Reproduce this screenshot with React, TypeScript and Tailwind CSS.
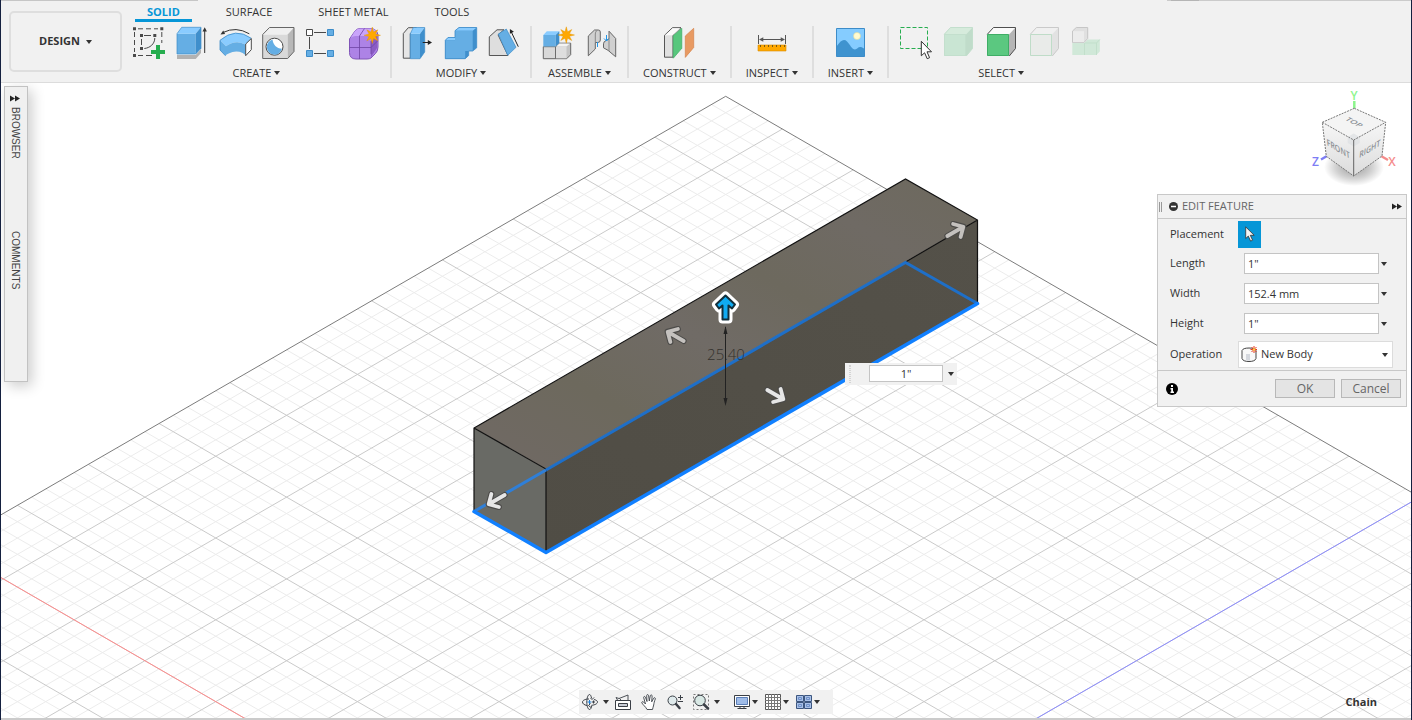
import { useState, type ReactNode } from 'react'

const INK = '#4a4a4a'

function Caret({ className = '' }: { className?: string }) {
  return (
    <svg className={`w-[6px] h-[4px] shrink-0 ${className}`} viewBox="0 0 6 4" aria-hidden="true">
      <path d="M0 0h6L3 4z" fill="#333" />
    </svg>
  )
}

function Glyph({ children }: { children: ReactNode }) {
  return (
    <svg className="block w-8 h-[34px] overflow-visible" viewBox="0 0 32 34" fill="none" aria-hidden="true">
      {children}
    </svg>
  )
}

function Star({ x, y }: { x: number; y: number }) {
  return (
    <path
      transform={`translate(${x} ${y})`}
      d="M0-8.200 1.300-3.200 5.500-5.500 3.200-1.300 8.200 0 3.200 1.300 5.500 5.500 1.300 3.200 0 8.200-1.300 3.200-5.500 5.500-3.200 1.300-8.200 0-3.200-1.300-5.500-5.500-1.300-3.200z"
      fill="#ffa800"
      stroke="#e09300"
      strokeWidth="0.4"
    />
  )
}

function SketchIcon() {
  return (
    <Glyph>
      <path d="M5 2.800h5m3 0h5m3 0h4M1.500 6v5m0 3v5m0 3v4M28.800 6v5m0 3v3M5 29.500h5m3 0h6" stroke={INK} />
      <path d="M11 9.500h7M8.500 13v6M21.800 12c0 6-5 10-10.500 10.500" stroke={INK} />
      <path d="M0 1.300h3v3H0zM27.300 1.300h3v3h-3zM0 28h3v3H0zM7 8h3v3H7zM20.300 8h3v3h-3zM7 21h3v3H7z" fill={INK} />
      <path d="M23 19h4v5h5v4h-5v5h-4v-5h-5v-4h5z" fill="#26ad4f" />
    </Glyph>
  )
}

function ExtrudeIcon() {
  return (
    <Glyph>
      <path d="M1 29h18.700l5.300-6v4l-5.300 6H1z" fill="#b2b2b2" />
      <path d="M1 7.700h18.700V28H1z" fill="#65aee4" />
      <path d="M1 7.700 5.700 1.300H25l-5.300 6.400z" fill="#8accff" />
      <path d="M19.700 7.700 25 1.300v21L19.700 28z" fill="#3f8fcc" />
      <path d="M1 7.700 5.700 1.300H25v21L19.700 28H1z" stroke="#3d8cc8" strokeWidth="0.7" />
      <path d="M28.700 27V4" stroke="#333" />
      <path d="m28.700 1.300 2.200 4.200h-4.400z" fill="#333" />
    </Glyph>
  )
}

function RevolveIcon() {
  return (
    <Glyph>
      <path d="M1 14.300Q16.500 1 32.300 12.300l-5.600 6.400Q17 13 7 20.300z" fill="#8accff" />
      <path d="M1 14.300l6 6Q17 13 26.700 18.700v11q-1-1.400-3-2.700-7-3-14 .5-2.500 1-3.200 2.300L1 24z" fill="#65aee4" />
      <path d="M1 14.300Q16.500 1 32.300 12.300M1 14.300V24l5.500 5.800" stroke="#3d8cc8" strokeWidth="0.8" />
      <path d="m26.700 18 5.600-5.500v11.200l-5.600 6z" fill="#fff" stroke={INK} />
      <path d="M30.300 7.800Q17 0 4 6.500" stroke="#333" />
      <path d="m1.500 8.500 2.700-4 1.900 3.600z" fill="#333" />
    </Glyph>
  )
}

function HoleIcon() {
  return (
    <Glyph>
      <path d="M.7 8.500h25v24H.7z" fill="#d9d9d9" />
      <path d="M.7 8.500 7.500 1.500H32l-6.300 7z" fill="#efefef" />
      <path d="m25.700 8.500 6.300-7v24l-6.300 7z" fill="#b8b8b8" />
      <path d="M.7 8.500 7.500 1.500H32v24l-6.300 7H.7z" stroke="#666" />
      <circle cx="12.5" cy="20.7" r="8.500" fill="#fff" stroke={INK} />
      <path d="M10.500 13.500c.5 5 4 9 9.500 9.200a7.700 7.700 0 1 1-9.500-9.200z" fill="#65aee4" />
    </Glyph>
  )
}

function PatternIcon() {
  return (
    <Glyph>
      <path d="M9 6.500h12M4.500 11v12M9 27.500h12" stroke={INK} />
      <path d="M1.500 3.500h6v6h-6z" fill="#fff" stroke={INK} />
      <path d="M22.500 3.500h6v6h-6zM1.500 24.500h6v6h-6zM22.500 24.500h6v6h-6z" fill="#65aee4" stroke="#3d8cc8" />
    </Glyph>
  )
}

function FormIcon() {
  return (
    <Glyph>
      <path d="M1.500 13 7 5q2-2.500 5-2.500h10q7 0 8 6.500v12q0 4-2.500 6.500L23 32q-1.500 1-4 1H8q-6.500 0-6.500-6.500z" fill="#ad83e6" stroke="#8055b8" />
      <path d="M2 13q2-3 6-3h10q5 0 5 5l6-8q-1-4.500-7-4.500H12q-3 0-5 2.500z" fill="#c9a4fa" />
      <path d="M23 15l6-7v14l-6 9z" fill="#8a5cc4" />
      <path d="M1.500 21.500H23l6.500-6.500M11.500 10v23M11.500 10l5-7.500M23 15v13" stroke="#6e44a3" strokeWidth="0.8" />
      <Star x={24.3} y={9.3} />
    </Glyph>
  )
}

function PressPullIcon() {
  return (
    <Glyph>
      <path d="M1.300 7.500 6.300 1.700h8l-6 6v24.500h-7z" fill="#e6e6e6" stroke="#555" />
      <path d="M8.300 7.700H18v25H8.300z" fill="#65aee4" />
      <path d="m8.300 7.700 3-6.200h11.400L18 7.700z" fill="#8accff" />
      <path d="m18 7.700 4.700-6.200V26L18 32.700z" fill="#3f8fcc" />
      <path d="m8.300 7.700 3-6.200h11.400V26L18 32.700H8.300z" stroke="#3d8cc8" strokeWidth="0.7" />
      <path d="M20.700 16.500H27" stroke="#222" />
      <path d="m30 16.500-4.200 2.400v-4.800z" fill="#222" />
    </Glyph>
  )
}

function CombineIcon() {
  return (
    <Glyph>
      <path d="M.3 14.300 3 11.500h7V4.700l4-3.200h17.700v20.300l-4 3.200h-4v4.500l-3.500 3.200H.3z" fill="#3f8fcc" />
      <path d="M.3 14.300 3 11.500h7v2.800zM10 4.700l4-3.200h17.700l-4 3.200z" fill="#8accff" />
      <path d="M.3 14.300H10V4.700h17.700V25h-7.500v7.700H.3z" fill="#65aee4" />
      <path d="M.3 14.300 3 11.500h7V4.700l4-3.200h17.700v20.300l-4 3.200h-4v4.500l-3.500 3.200H.3z" stroke="#3d8cc8" strokeWidth="0.8" />
    </Glyph>
  )
}

function ChamferIcon() {
  return (
    <Glyph>
      <path d="M1.300 29.500V10.800L9 3.800h7l-6 5 10 20.700z" fill="#dedede" stroke="#555" />
      <path d="m10.300 8 8-5L28 21.300l-8.300 8z" fill="#65aee4" stroke="#3d8cc8" strokeWidth="0.7" />
      <path d="M30.300 20.700 23.300 6" stroke="#222" />
      <path d="m21.900 3 4 2.700-4 2z" fill="#222" />
    </Glyph>
  )
}

function NewComponentIcon() {
  return (
    <Glyph>
      <path d="M1.300 20.700h12.400v12H1.300z" fill="#d9d9d9" stroke="#666" />
      <path d="m13.700 20.700 3.600-3.500h11.400v11.500l-4 4h-11z" fill="#c4c4c4" stroke="#666" />
      <path d="M14 21h10.500v11.300H14z" fill="#dedede" />
      <path d="m14.200 20.600 3.300-3H28l-3.500 3z" fill="#f3f3f3" />
      <path d="M1.300 9h12.400v11.500H1.300z" fill="#65aee4" />
      <path d="m1.300 9 3.500-3.800h12.500L13.700 9z" fill="#8accff" />
      <path d="m13.700 9 3.600-3.800V17l-3.600 3.500z" fill="#3f8fcc" />
      <Star x={24.3} y={9} />
    </Glyph>
  )
}

function JointIcon() {
  return (
    <Glyph>
      <path d="m3.300 10 6.200-6h3.800q2 0 2 2v8q0 2.500-2.500 2.500h-2.500V23l-7 6.800z" fill="#d0d0d0" stroke="#666" />
      <path d="M10.300 16V8q0-2 1.500-3.500" stroke="#888" />
      <path d="M30.700 12.500 24 5.200v7.600l-2.500 1.500q-3 1-3 3.500v4l4.500 2.500 7.700 6.500z" fill="#d0d0d0" stroke="#666" />
      <path d="M24 13v12" stroke="#888" />
      <path d="M12.500 16v5M21.500 9v6" stroke="#2196e8" />
      <path d="m19 12.500 2.500 2.500 2.500-2.500" stroke="#2196e8" />
    </Glyph>
  )
}

function PlaneIcon() {
  return (
    <Glyph>
      <path d="m1.500 9.300 8-7.600H18l-8 7.500v22H1.500z" fill="#e0e0e0" stroke="#555" />
      <path d="M2 9.200 9.700 2.200h7.500l-7.500 7z" fill="#fafafa" />
      <path d="m10.300 9.700 8.500-7.400v20l-8.500 9.900z" fill="#57c77d" stroke="#3fae66" strokeWidth="0.7" />
      <path d="m22.300 10 8.400-7.700v19.200l-8.400 9.900z" fill="#e89a62" stroke="#d5834a" strokeWidth="0.7" />
    </Glyph>
  )
}

function MeasureIcon() {
  return (
    <Glyph>
      <path d="M2.500 9v9M29.500 9v9M5 13.500h22" stroke="#555" />
      <path d="m3 13.500 4.300-2.300v4.600zM29 13.500l-4.300-2.300v4.600z" fill="#555" />
      <path d="M2 19h28v6H2z" fill="#ffa800" stroke="#d98a00" strokeWidth="0.6" />
      <path d="M4.500 19v2m4-2v2m4-2v2m4-2v2m4-2v2m4-2v2m4-2v2" stroke="#7a5a10" />
    </Glyph>
  )
}

function ImageIcon() {
  return (
    <Glyph>
      <path d="M2.500 2.500h28v28h-28z" fill="#85ccff" />
      <path d="M2.500 20.500C7 14 10 12.500 13 15.500s5 8 8 8 3.500-5 9.500-.5v7.500h-28z" fill="#3f93cf" />
      <path d="M2.500 2.500h28v28h-28z" stroke="#3d8cc8" />
      <circle cx="23" cy="10" r="3.500" fill="#fffbd0" stroke="#dcd9a0" strokeWidth="0.6" />
    </Glyph>
  )
}

function WindowSelectIcon() {
  return (
    <Glyph>
      <path d="M1.500 1.500h27v21h-27z" stroke="#26ad4f" strokeDasharray="4 2" />
      <path d="M22.300 15.300v14.500l3.300-3 2.600 5.900 2.400-1-2.600-5.900h4.500z" fill="#fff" stroke="#333" />
    </Glyph>
  )
}

function Cube({ front, top, side, line, edge }: { front: string; top: string; side: string; line: string; edge: string }) {
  return (
    <Glyph>
      <path d="M2.300 8.300 8.500 1.500h22v21L24.300 30h-22z" fill={side} />
      <path d="M2.300 8.300 8.500 1.500h22l-6.200 6.800z" fill={top} />
      <path d="M2.300 8.300 8.500 1.500h22v21L24.300 30" stroke={line} />
      <path d="M2.500 8.500h21v21h-21z" fill={front} stroke={edge} />
    </Glyph>
  )
}

function ComponentSelectIcon() {
  return (
    <Glyph>
      <path d="M1.300 17h12l3.500-3.500h12v12l-3.500 3.500h-24z" fill="#d0e8d8" />
      <path d="M13.500 17v12M13.500 17h12l3.300-3.500M25.500 17v12" stroke="#c2dfcb" />
      <path d="m1.500 5 3.800-3.500h11.400v11L13 16.500H1.500z" fill="#e0e0e0" stroke="#c6c6c6" />
      <path d="M2 5.200h11v11H2z" fill="#ececec" />
    </Glyph>
  )
}

const tabs = ['SOLID', 'SURFACE', 'SHEET METAL', 'TOOLS']

const groups: { label: string; tools: { name: string; icon: ReactNode }[] }[] = [
  {
    label: 'CREATE',
    tools: [
      { name: 'Create Sketch', icon: <SketchIcon /> },
      { name: 'Extrude', icon: <ExtrudeIcon /> },
      { name: 'Revolve', icon: <RevolveIcon /> },
      { name: 'Hole', icon: <HoleIcon /> },
      { name: 'Rectangular Pattern', icon: <PatternIcon /> },
      { name: 'Create Form', icon: <FormIcon /> },
    ],
  },
  {
    label: 'MODIFY',
    tools: [
      { name: 'Press Pull', icon: <PressPullIcon /> },
      { name: 'Combine', icon: <CombineIcon /> },
      { name: 'Chamfer', icon: <ChamferIcon /> },
    ],
  },
  {
    label: 'ASSEMBLE',
    tools: [
      { name: 'New Component', icon: <NewComponentIcon /> },
      { name: 'Joint', icon: <JointIcon /> },
    ],
  },
  { label: 'CONSTRUCT', tools: [{ name: 'Offset Plane', icon: <PlaneIcon /> }] },
  { label: 'INSPECT', tools: [{ name: 'Measure', icon: <MeasureIcon /> }] },
  { label: 'INSERT', tools: [{ name: 'Canvas', icon: <ImageIcon /> }] },
  {
    label: 'SELECT',
    tools: [
      { name: 'Window Selection', icon: <WindowSelectIcon /> },
      { name: 'Bodies', icon: <Cube front="#c9e5d3" top="#d6ebdc" side="#c0dcca" line="#c3dfcd" edge="#c3dfcd" /> },
      { name: 'Faces', icon: <Cube front="#5bc880" top="#fafafa" side="#b5b5b5" line="#4f4f4f" edge="#3fae66" /> },
      { name: 'Edges', icon: <Cube front="#e9ebe9" top="#f0f0f0" side="#e2e2e2" line="#cacaca" edge="#bfdcc8" /> },
      { name: 'Components', icon: <ComponentSelectIcon /> },
    ],
  },
]

function Toolbar() {
  const [tab, setTab] = useState('SOLID')

  return (
    <header className="flex bg-[#f1f1f1] border-b border-[#dcdcdc]">
      <button
        type="button"
        className="mt-[11px] mb-[10px] ml-2 w-[113px] h-[61px] shrink-0 flex items-center justify-center gap-[6px] rounded-[5px] border-2 border-[#dedede] font-bold"
      >
        DESIGN
        <Caret />
      </button>
      <div className="flex-1 min-w-0">
        <nav className="flex gap-[22px] ml-[13px]">
          {tabs.map((t) => (
            <button
              key={t}
              type="button"
              onClick={() => setTab(t)}
              className={
                t === tab
                  ? 'h-[22px] px-3 pt-[5px] leading-[14px] border-b-[3px] border-[#0696d7] text-[#0696d7] font-bold whitespace-nowrap'
                  : 'h-[22px] px-3 pt-[5px] leading-[14px] border-b-[3px] border-transparent whitespace-nowrap'
              }
            >
              {t}
            </button>
          ))}
        </nav>
        <div className="flex mt-1 ml-px">
          {groups.map((g, i) => (
            <section
              key={g.label}
              className={
                i < groups.length - 1
                  ? 'flex flex-col items-center h-[52px] px-[10px] border-r-2 border-[#dedede]'
                  : 'flex flex-col items-center h-[52px] px-[10px]'
              }
            >
              <div className="flex gap-[11px]">
                {g.tools.map((tool) => (
                  <button key={tool.name} type="button" aria-label={tool.name}>
                    {tool.icon}
                  </button>
                ))}
              </div>
              <button type="button" className="flex items-center gap-[3px] mt-[5px] px-1 leading-4">
                {g.label}
                <Caret />
              </button>
            </section>
          ))}
        </div>
      </div>
    </header>
  )
}

// Grid origin is the far corner; one step is one minor cell along either edge.
const OX = 725.7
const OY = 96.3
const SX = 14.165
const SY = 8.18
const SIZE = 110

function gridPath(test: (n: number) => boolean, offset: number, dir: 1 | -1) {
  let d = ''
  for (let n = 1; n < SIZE; n++) {
    if (!test(n - offset)) continue
    const x = OX + dir * n * SX
    const y = OY + n * SY
    d += `M${x.toFixed(1)} ${y.toFixed(1)}l${(-dir * SIZE * SX).toFixed(1)} ${(SIZE * SY).toFixed(1)}`
  }
  return d
}

const isMajor = (n: number) => n % 5 === 0
const isMinor = (n: number) => n % 5 !== 0

function Manipulator({ x, y, angle, fill = '#e6e6e6' }: { x: number; y: number; angle: number; fill?: string }) {
  const d = 'M-10 0H8M1-7.500 8.500 0 1 7.500'
  return (
    <g transform={`translate(${x} ${y}) rotate(${angle})`} fill="none" strokeLinecap="round" strokeLinejoin="round">
      <path d={d} stroke="#4c4b49" strokeWidth="6" />
      <path d={d} stroke={fill} strokeWidth="3.8" />
    </g>
  )
}

function Scene() {
  return (
    <svg
      className="absolute inset-0 w-full h-full"
      viewBox="1 83 1410 635"
      preserveAspectRatio="xMidYMid slice"
      role="img"
      aria-label="Box preview"
    >
      <defs>
        <linearGradient id="top" x1="0" y1="1" x2="1" y2="0">
          <stop offset="0" stopColor="#706965" />
          <stop offset="0.25" stopColor="#6d695d" />
          <stop offset="0.45" stopColor="#706b66" />
          <stop offset="0.62" stopColor="#6d695e" />
          <stop offset="0.8" stopColor="#6f6a64" />
          <stop offset="1" stopColor="#6d695d" />
        </linearGradient>
        <linearGradient id="side" x1="0" y1="1" x2="1" y2="0">
          <stop offset="0" stopColor="#504d45" />
          <stop offset="1" stopColor="#545149" />
        </linearGradient>
      </defs>
      <g fill="none">
        <path d={gridPath(isMinor, 4, 1) + gridPath(isMinor, 0, -1)} stroke="#ececec" />
        <path d={gridPath(isMajor, 4, 1) + gridPath(isMajor, 0, -1)} stroke="#cacaca" />
        <path d={`M${OX - SIZE * SX} ${OY + SIZE * SY}L${OX} ${OY}l${SIZE * SX} ${SIZE * SY}`} stroke="#7c7c7c" />
        <path d={`M${OX - 55 * SX} ${OY + 55 * SY}l${50 * SX} ${50 * SY}`} stroke="#ff8c8c" />
        <path d={`M${OX + 49 * SX} ${OY + 49 * SY}l${-50 * SX} ${50 * SY}`} stroke="#8c8cff" />
      </g>

      <path d="M474 428 905.500 179 977.500 220 546 469z" fill="url(#top)" />
      <path d="M546 469 977.500 220V303.500L546 552.500z" fill="url(#side)" />
      <path d="M474 428 546 469V552.500L474 511.500z" fill="#696a65" />
      <path d="M474 511.500V428L905.500 179 977.500 220V303.500M474 428 546 469V552.500M905.500 262 977.500 220" fill="none" stroke="#111" strokeWidth="1.2" />
      <path d="M474 511.500 546 470" stroke="#2f7fd8" strokeWidth="3" />
      <path d="M546 470 905.500 262.500 977.500 303.500" fill="none" stroke="#1e6fc8" strokeWidth="3" />
      <path d="M474 511.500 546 552.500 977.500 303.500" fill="none" stroke="#1180ff" strokeWidth="3.5" strokeLinejoin="round" strokeLinecap="round" />

      <text x="726" y="360" textAnchor="middle" fill="#34322e" fontSize="15" fontWeight="300">
        25.40
      </text>
      <path d="M725.500 327V404" stroke="#222" />
      <path d="m725.500 326 2 8h-4zM725.500 406l2-8h-4z" fill="#222" />

      <Manipulator x={675} y={336} angle={-150} fill="#c4c1be" />
      <Manipulator x={776} y={395} angle={30} />
      <Manipulator x={956} y={231} angle={-30} fill="#c4c1be" />
      <Manipulator x={496} y={500} angle={150} />

      <g strokeLinejoin="round">
        <path d="M725.500 295.500 735 304.500 732 308.500 728.500 305.500V319.500H722.500V305.500L719 308.500 716 304.500z" fill="#fff" stroke="#fff" strokeWidth="8" />
        <path d="M725.500 295.500 735 304.500 732 308.500 728.500 305.500V319.500H722.500V305.500L719 308.500 716 304.500z" fill="#0fabf2" stroke="#12303c" strokeWidth="2" />
      </g>
    </svg>
  )
}

function ViewCube() {
  return (
    <svg className="absolute top-[5px] right-[11px] w-[92px] h-[104px]" viewBox="1308 88 92 104" role="img" aria-label="View cube">
      <defs>
        <radialGradient id="shadow">
          <stop offset="0" stopColor="#000" stopOpacity="0.4" />
          <stop offset="0.6" stopColor="#000" stopOpacity="0.18" />
          <stop offset="1" stopColor="#000" stopOpacity="0" />
        </radialGradient>
        <linearGradient id="face" x1="0" y1="0" x2="0" y2="1">
          <stop offset="0" stopColor="#f6f6f6" />
          <stop offset="1" stopColor="#dcdcdc" />
        </linearGradient>
      </defs>
      <ellipse cx="1354" cy="167" rx="30" ry="19" fill="url(#shadow)" />
      <path d="M1354.300 101v7" stroke="#8cf58c" strokeWidth="2.5" />
      <path d="m1327 156-6 3.500" stroke="#7d7df5" strokeWidth="2.5" />
      <path d="m1381 156 7 4" stroke="#f58c8c" strokeWidth="2.5" />
      <path d="m1354.300 108.300 31.400 14-32 17.700-31.400-17.700z" fill="#f4f4f4" />
      <path d="m1322.300 122.300 31.400 17.700v36l-27.400-19.700z" fill="url(#face)" />
      <path d="m1385.700 122.300-32 17.700v36l28.300-20z" fill="url(#face)" />
      <path d="m1353.700 133.500 6 3.500v6l-6 3.500-6-3.500v-6z" fill="#dde0e3" opacity="0.7" />
      <path
        d="m1354.300 108.300 31.400 14-3.700 33.700-28.300 20-27.400-19.700-4-34zM1322.300 122.300l31.400 17.700 32-17.700"
        fill="none"
        stroke="#777"
        strokeDasharray="2 1"
      />
      <path d="M1353.700 140v36" stroke="#666" />
      <g fontSize="9" fill="#8a8f94" textAnchor="middle" fontWeight="600">
        <text transform="matrix(.84 .46 -.7 .4 1352 123.500)">TOP</text>
        <text transform="matrix(.78 .47 .1 1 1338.500 152)">FRONT</text>
        <text transform="matrix(.78 -.47 -.1 1 1369.500 152)">RIGHT</text>
      </g>
      <g fontSize="12" fontWeight="600" textAnchor="middle">
        <text x="1354" y="100" fill="#8cf58c">Y</text>
        <text x="1315.5" y="166" fill="#7d7df5">Z</text>
        <text x="1392" y="166" fill="#f58c8c">X</text>
      </g>
    </svg>
  )
}

function FastForward({ className = '' }: { className?: string }) {
  return (
    <svg className={`w-[10px] h-[7px] ${className}`} viewBox="0 0 10 7" aria-hidden="true">
      <path d="m0 .5 5 3-5 3zM5 .5l5 3-5 3z" fill="#222" />
    </svg>
  )
}

function SidePanels() {
  return (
    <aside className="absolute left-[3px] top-[3px] w-6 h-[296px] flex flex-col items-center pr-[2px] bg-[#f0f0f0] border border-[#c2c2c2] shadow-[4px_4px_14px_rgba(0,0,0,0.2)] font-['Liberation_Sans',sans-serif] text-[10px] leading-3 text-[#444]">
      <button type="button" aria-label="Expand" className="mt-2">
        <FastForward />
      </button>
      <button type="button" className="h-[124px] mt-[5px] text-start [writing-mode:vertical-rl]">
        BROWSER
      </button>
      <button type="button" className="text-start [writing-mode:vertical-rl]">
        COMMENTS
      </button>
    </aside>
  )
}

function ValueField({ id, label, value }: { id: string; label: string; value: string }) {
  const [text, setText] = useState(value)
  return (
    <div className="flex items-center h-[30px] pl-3 pb-px">
      <label htmlFor={id} className="w-[74px]">
        {label}
      </label>
      <input
        id={id}
        value={text}
        onChange={(e) => setText(e.target.value)}
        className="w-[135px] h-[21px] px-[3px] bg-white border border-[#c4c4c4] outline-none"
      />
      <button type="button" aria-label={`${label} options`} className="p-[2px] py-2">
        <Caret />
      </button>
    </div>
  )
}

function EditFeature() {
  return (
    <form
      onSubmit={(e) => e.preventDefault()}
      className="absolute top-[111px] right-1 w-[250px] bg-[#f1f1f1] border border-[#c8c8c8]"
    >
      <div className="flex items-center h-6 pl-px pr-1 border-b border-[#c8c8c8] text-[#666]">
        <span className="w-[3px] h-[10px] border-x border-[#999]" />
        <svg className="w-[9px] h-[9px] ml-[7px] mr-1" viewBox="0 0 9 9" aria-hidden="true">
          <circle cx="4.5" cy="4.5" r="4.5" fill="#333" />
          <path d="M2 4.500h5" stroke="#fff" strokeWidth="1.5" />
        </svg>
        <h2>EDIT FEATURE</h2>
        <button type="button" aria-label="Collapse panel" className="ml-auto">
          <FastForward />
        </button>
      </div>

      <div className="flex items-center h-[30px] pl-3">
        <span className="w-[68px]">Placement</span>
        <button type="button" aria-label="Select placement" className="w-[23px] h-[27px] flex items-center justify-center bg-[#0696d7]">
          <svg className="w-[10px] h-[16px]" viewBox="0 0 10 16" aria-hidden="true">
            <path d="M.7.900v11.600l2.600-2.400 2.300 5 2-.9-2.300-4.900h3.900z" fill="#f4f4f4" stroke="#333" strokeWidth="0.8" />
          </svg>
        </button>
      </div>
      <ValueField id="length" label="Length" value={'1"'} />
      <ValueField id="width" label="Width" value="152.4 mm" />
      <ValueField id="height" label="Height" value={'1"'} />
      <div className="flex items-center h-8 pl-3 pb-px border-b border-[#c8c8c8]">
        <label htmlFor="operation" className="w-[68px]">
          Operation
        </label>
        <div className="relative">
          <select id="operation" className="appearance-none w-[155px] h-[27px] pl-[22px] bg-white border border-[#dcdcdc] outline-none">
            <option>New Body</option>
            <option>Join</option>
            <option>Cut</option>
          </select>
          <svg className="absolute left-[3px] top-[5px] w-4 h-4 pointer-events-none" viewBox="0 0 16 16" aria-hidden="true">
            <path d="M1 4.500v8Q2 15.500 8 15.500t7-3v-8Q14 2 8 2T1 4.500z" fill="#f8f8f8" stroke="#444" />
            <path d="M5 8h4v6.500H5z" fill="#d5d8de" />
            <path d="M13 0v7M9.500 3.500h7M10.500 1l5 5M15.500 1l-5 5" stroke="#e8391c" />
            <circle cx="13" cy="3.5" r="1.3" fill="#ffd24a" />
          </svg>
          <Caret className="absolute right-[5px] top-[12px] pointer-events-none" />
        </div>
      </div>

      <div className="flex items-center h-[35px] pl-2 pr-[5px] text-xs text-[#666]">
        <svg className="w-3 h-3" viewBox="0 0 12 12" role="img" aria-label="Info">
          <circle cx="6" cy="6" r="6" fill="#000" />
          <path d="M5 2h2v2H5zM4.500 5H7v3.500h1V10H4.500V8.500h.7v-2h-.7z" fill="#fff" />
        </svg>
        <button type="submit" className="ml-auto w-[60px] h-[19px] leading-4 bg-[#e4e4e4] border border-[#b8b8b8]">
          OK
        </button>
        <button type="button" className="ml-[6px] w-[60px] h-[19px] leading-4 bg-[#e4e4e4] border border-[#b8b8b8]">
          Cancel
        </button>
      </div>
    </form>
  )
}

function DimensionInput() {
  const [text, setText] = useState('1"')
  return (
    <div className="absolute left-1/2 top-[280px] ml-[139px] flex items-center h-[22px] w-28 pb-px bg-[#f1f1f1]">
      <span className="ml-1 mr-[18px] h-[18px] w-[3px] border-x border-dotted border-[#d4d4d4]" />
      <input
        aria-label="Height dimension"
        value={text}
        onChange={(e) => setText(e.target.value)}
        className="w-[74px] h-[17px] text-center bg-white border border-[#c4c4c4] outline-none"
      />
      <button type="button" aria-label="Dimension options" className="px-[5px] py-2">
        <Caret />
      </button>
    </div>
  )
}

function Small({ children }: { children: ReactNode }) {
  return (
    <svg className="block w-4 h-4 overflow-visible" viewBox="0 0 16 16" fill="none" stroke="#3a3f46" aria-hidden="true">
      {children}
    </svg>
  )
}

function NavBar() {
  return (
    <div className="absolute bottom-1 left-1/2 -translate-x-1/2 w-[254px] h-6 flex items-center pl-[3px] bg-[#f1f1f1]">
      <button type="button" aria-label="Orbit" className="flex items-center gap-[5px]">
        <Small>
          <path d="M5 11.500C2 11 .5 9.500.5 8S3 5 7 5M12 5.500c2.300.5 3.500 1.500 3.500 2.500 0 1.700-2.500 3-6 3.300" />
          <path d="M9.500 4C9 1.500 8.300.5 7.500.5 6 .5 4.800 4 4.800 8s1.200 7.500 2.700 7.500c1 0 2-1.500 2.300-4" />
          <path d="m8.500 9.500-2 2 2.500 2M8.500 4 10 5.500 12 3.500" />
          <path d="M7.500 6v4M5.500 8h4" stroke="#1e7fd6" />
          <path d="M11.500 6.500v3M10 8h3" />
        </Small>
        <Caret />
      </button>
      <button type="button" aria-label="Look At" className="ml-[6px]">
        <Small>
          <path d="M.5 6.500h15v9H.5z" fill="#fff" />
          <path d="M3.500 9.500h9v3h-9z" fill="#c9cdd6" />
          <path d="M2.500 6 1 3.500l3 1L13 1v5M4.500 4.500 6 6" strokeWidth="0.9" />
        </Small>
      </button>
      <button type="button" aria-label="Pan" className="ml-[10px]">
        <Small>
          <path
            d="M6 15.500C5 13 1.500 10.500.8 8.800c-.3-1 1-1.500 1.800-.8L4.500 10 2.700 3.700c-.3-1.400 1.200-1.700 1.700-.5L6 7.500 5.700 1.700c0-1.500 1.600-1.500 1.900 0L8.300 7l1-5.300c.4-1.300 1.800-1 1.800.3L10.700 7.800l2-3.600c.8-1 2-.4 1.600.8-1 2.500-1.300 4-1.600 6-.3 1.700-1 3-1.200 4.500z"
            fill="#fff"
            strokeWidth="0.9"
          />
        </Small>
      </button>
      <button type="button" aria-label="Zoom" className="ml-[10px]">
        <Small>
          <circle cx="5.5" cy="6.5" r="4.5" fill="#dfeaec" />
          <path d="m9 10 3.500 4" strokeWidth="2.5" strokeLinecap="round" />
          <path d="M11 3.500h5M13.500 1v5M11 7.500h5" />
        </Small>
      </button>
      <button type="button" aria-label="Fit" className="ml-[10px] flex items-center gap-[5px]">
        <Small>
          <path d="M.5.500h15v15H.5z" stroke="#777" strokeDasharray="2 2" />
          <circle cx="7" cy="6.5" r="5.3" fill="#d8e8e4" />
          <path d="m11 10.500 4 4" strokeWidth="2.5" strokeLinecap="round" />
        </Small>
        <Caret />
      </button>
      <button type="button" aria-label="Display Settings" className="ml-[14px] flex items-center gap-[2px]">
        <Small>
          <path d="M.5 1.500h15v11H.5z" fill="#fff" />
          <path d="M2.500 3.500h11v7h-11z" fill="#9fbce8" stroke="#5c7fb8" />
          <path d="M6 12.500v2M10 12.500v2M3.500 14.500h9" />
        </Small>
        <Caret />
      </button>
      <button type="button" aria-label="Grid and Snaps" className="ml-[7px] flex items-center gap-[2px]">
        <Small>
          <path d="M.5.500h15v15H.5z" fill="#fff" stroke="#555" />
          <path d="M3.500 0v16M6.500 0v16M9.500 0v16M12.500 0v16M0 3.500h16M0 6.500h16M0 9.500h16M0 12.500h16" stroke="#777" />
        </Small>
        <Caret />
      </button>
      <button type="button" aria-label="Viewports" className="ml-[7px] flex items-center gap-[2px]">
        <Small>
          <path d="M.5 1.500h7v6h-7zM8.500 1.500h7v6h-7zM.5 8.500h7v6h-7zM8.500 8.500h7v6h-7z" fill="#a9c1e8" stroke="#3c5680" />
          <path d="M2.500 3.500h3v2h-3zM10.500 3.500h3v2h-3zM2.500 10.500h3v2h-3zM10.500 10.500h3v2h-3z" stroke="#6d8fc8" />
        </Small>
        <Caret />
      </button>
    </div>
  )
}

export default function App() {
  return (
    <div className="min-h-screen flex flex-col bg-[#f1f1f1] border-x border-[#14203f] text-[11px] text-[#333] font-['Open_Sans',sans-serif]">
      <div className="relative">
        <div className="absolute top-0 left-0 w-[197px] h-px bg-[#c6c6c6]" />
        <div className="absolute top-0 right-0 w-[244px] h-px bg-[#cbcbcb]" />
        <div className="absolute top-0 right-[212px] w-7 h-px bg-[#b5b5b5]" />
        <Toolbar />
      </div>
      <main className="relative flex-1 min-h-[420px] overflow-hidden bg-white border-b-2 border-[#cbcbcb]">
        <Scene />
        <SidePanels />
        <ViewCube />
        <EditFeature />
        <DimensionInput />
        <NavBar />
        <span className="absolute right-[34px] bottom-2 font-bold">Chain</span>
      </main>
    </div>
  )
}
